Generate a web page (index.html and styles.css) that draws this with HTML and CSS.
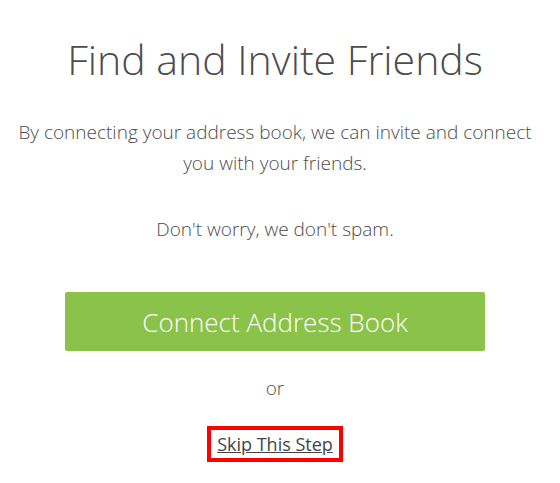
FILE: index.html
```html
<!DOCTYPE html>
<html lang="en">
<head>
    <meta charset="UTF-8">
    <meta name="viewport" content="width=device-width, initial-scale=1.0">
    <title>Find and Invite Friends</title>
    <link rel="stylesheet" href="styles.css">
</head>
<body>
    <div class="container">
        <h1>Find and Invite Friends</h1>
        <p class="intro">By connecting your address book, we can invite and connect you with your friends.</p>
        <p class="note">Don't worry, we don't spam.</p>
        <div class="actions">
            <button type="button" class="connect-btn">Connect Address Book</button>
            <p class="or">or</p>
            <a href="#" class="skip-link">Skip This Step</a>
        </div>
    </div>
</body>
</html>
```

FILE: styles.css
```css
body {
    font-family: "Open Sans", Arial, sans-serif;
    font-weight: 300;
    color: #4d4d4d;
    margin: 0;
    padding: 0;
    background-color: #fff;
}

.container {
    width: 550px;
    text-align: center;
}

h1 {
    font-size: 41px;
    font-weight: 300;
    margin: 34px 0 0;
    line-height: 50px;
}

.intro {
    font-size: 19px;
    line-height: 31px;
    margin: 33px 0 0;
    padding: 0 10px;
}

.note {
    font-size: 19px;
    line-height: 31px;
    margin: 35px 0 0;
}

.actions {
    display: flex;
    flex-direction: column;
    align-items: center;
}

.connect-btn {
    width: 420px;
    height: 59px;
    margin-top: 47px;
    background-color: #8bc34a;
    color: #fff;
    border: none;
    border-radius: 2px;
    font-family: "Open Sans", Arial, sans-serif;
    font-weight: 300;
    font-size: 26px;
    cursor: pointer;
}

.or {
    font-size: 19px;
    line-height: 31px;
    margin: 22px 0 0;
}

.skip-link {
    margin-top: 22px;
    padding: 0 6px;
    border: 4px solid #f00;
    color: #444;
    font-size: 18px;
    font-weight: 400;
    line-height: 28px;
}
```
